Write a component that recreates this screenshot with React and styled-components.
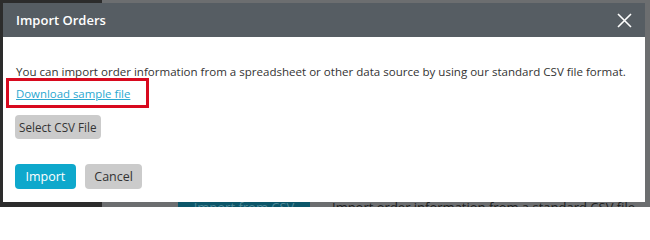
import React from "react";
import styled, { createGlobalStyle } from "styled-components";

const GlobalStyle = createGlobalStyle`
  html, body {
    margin: 0;
    padding: 0;
    width: 650px;
    height: 207px;
    overflow: hidden;
    font-family: "Open Sans", "Liberation Sans", sans-serif;
  }
`;

const Page = styled.div`
  position: relative;
  display: flex;
  width: 650px;
  height: 207px;
  overflow: hidden;
  background: #6c6e70;
`;

const Sidebar = styled.div`
  width: 102px;
  background: #2c2c2c;
`;

const Main = styled.div`
  flex: 1;
  display: flex;
  align-items: flex-start;
  gap: 22px;
  padding: 196px 0 0 76px;
`;

const BackButton = styled.div`
  width: 132px;
  height: 30px;
  flex-shrink: 0;
  background: #0c5669;
  color: #4d8796;
  font-size: 13px;
  text-align: center;
  line-height: 22px;
`;

const BackText = styled.div`
  color: #1e1f20;
  font-size: 13px;
  line-height: 22px;
  white-space: nowrap;
`;

const Modal = styled.div`
  position: absolute;
  left: 3px;
  top: 3px;
  width: 642px;
  height: 199px;
  display: flex;
  flex-direction: column;
  background: #fff;
`;

const Header = styled.div`
  height: 34px;
  flex-shrink: 0;
  display: flex;
  align-items: center;
  justify-content: space-between;
  padding: 0 13px;
  background: #565d63;
`;

const Title = styled.h2`
  margin: 0;
  color: #fff;
  font-size: 13px;
  font-weight: 600;
`;

const Close = styled.button`
  display: flex;
  align-items: center;
  justify-content: center;
  width: 16px;
  height: 16px;
  padding: 0;
  border: none;
  background: none;
  cursor: pointer;
`;

const Body = styled.div`
  display: flex;
  flex-direction: column;
  align-items: flex-start;
  padding: 25px 12px 0;
`;

const Text = styled.p`
  margin: 0 0 0 1px;
  color: #333;
  font-size: 11.55px;
  line-height: 20px;
  white-space: nowrap;
`;

const Highlight = styled.div`
  box-sizing: border-box;
  width: 143px;
  margin: -4px 0 0 -9px;
  padding: 0 0 0 7px;
  border: 3px solid #d8091e;
  line-height: 22px;
`;

const Link = styled.a`
  color: #2aa7d0;
  font-size: 11.4px;
  text-decoration: underline;
`;

const Button = styled.button`
  height: ${(p) => p.$h || 24}px;
  padding: 0 ${(p) => p.$px || 4}px;
  border: none;
  border-radius: 4px;
  background: ${(p) => (p.$primary ? "#0ea8cc" : "#cbcbcb")};
  color: ${(p) => (p.$primary ? "#fff" : "#333")};
  font-family: inherit;
  font-size: ${(p) => p.$fs || 11.7}px;
  cursor: pointer;
`;

const FileRow = styled.div`
  margin-top: 7px;
`;

const Actions = styled.div`
  display: flex;
  gap: 9px;
  margin-top: 25px;
`;

export default function App() {
  return (
    <>
      <GlobalStyle />
      <Page>
        <Sidebar />
        <Main>
          <BackButton>Import from CSV</BackButton>
          <BackText>Import order information from a standard CSV file.</BackText>
        </Main>
        <Modal>
          <Header>
            <Title>Import Orders</Title>
            <Close aria-label="Close">
              <svg width="15" height="15" viewBox="0 0 15 15">
                <path d="M1 1 L14 14 M14 1 L1 14" stroke="#fff" strokeWidth="1.6" fill="none" />
              </svg>
            </Close>
          </Header>
          <Body>
            <Text>
              You can import order information from a spreadsheet or other data source by using our standard CSV file format.
            </Text>
            <Highlight>
              <Link href="#">Download sample file</Link>
            </Highlight>
            <FileRow>
              <Button $px={4}>Select CSV File</Button>
            </FileRow>
            <Actions>
              <Button $primary $h={25} $px={10.5} $fs={12.5}>Import</Button>
              <Button $h={25} $px={9.5} $fs={12.5}>Cancel</Button>
            </Actions>
          </Body>
        </Modal>
      </Page>
    </>
  );
}
